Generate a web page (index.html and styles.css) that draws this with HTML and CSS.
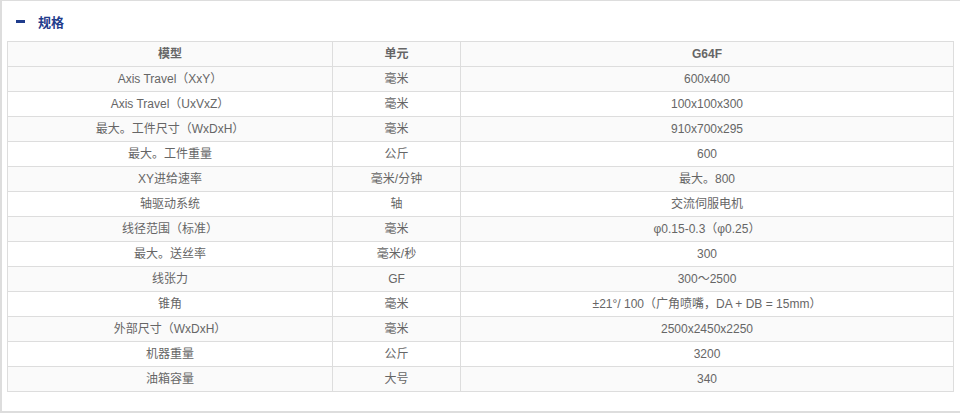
FILE: index.html
```html
<!DOCTYPE html>
<html lang="zh">
<head>
<meta charset="utf-8">
<title>规格</title>
<link rel="stylesheet" href="styles.css">
</head>
<body>
<div class="panel">
  <div class="panel-title"><span class="dash"></span><span class="title-text">规格</span></div>
  <table class="spec">
    <colgroup><col class="c1"><col class="c2"><col class="c3"></colgroup>
    <thead>
      <tr><th>模型</th><th>单元</th><th>G64F</th></tr>
    </thead>
    <tbody>
      <tr><td>Axis Travel（XxY）</td><td>毫米</td><td>600x400</td></tr>
      <tr><td>Axis Travel（UxVxZ）</td><td>毫米</td><td>100x100x300</td></tr>
      <tr><td>最大。工件尺寸（WxDxH）</td><td>毫米</td><td>910x700x295</td></tr>
      <tr><td>最大。工件重量</td><td>公斤</td><td>600</td></tr>
      <tr><td>XY进给速率</td><td>毫米/分钟</td><td>最大。800</td></tr>
      <tr><td>轴驱动系统</td><td>轴</td><td>交流伺服电机</td></tr>
      <tr><td>线径范围（标准）</td><td>毫米</td><td>φ0.15-0.3（φ0.25）</td></tr>
      <tr><td>最大。送丝率</td><td>毫米/秒</td><td>300</td></tr>
      <tr><td>线张力</td><td>GF</td><td>300～2500</td></tr>
      <tr><td>锥角</td><td>毫米</td><td>±21°/ 100（广角喷嘴，DA + DB = 15mm）</td></tr>
      <tr><td>外部尺寸（WxDxH）</td><td>毫米</td><td>2500x2450x2250</td></tr>
      <tr><td>机器重量</td><td>公斤</td><td>3200</td></tr>
      <tr><td>油箱容量</td><td>大号</td><td>340</td></tr>
    </tbody>
  </table>
</div>
</body>
</html>
```
FILE: styles.css
```css
html, body {
  margin: 0;
  padding: 0;
  background: #ffffff;
}
body {
  font-family: "Liberation Sans", Arial, "Noto Sans CJK SC", sans-serif;
  font-size: 12px;
  color: #666666;
}
.panel {
  width: 955px;
  height: 410px;
  border-style: solid;
  border-color: #dddddd;
  border-width: 1px 2px 2px 2px;
  padding: 0 0 0 5px;
  box-sizing: content-box;
}
.panel-title {
  height: 40px;
  display: flex;
  align-items: center;
  padding-left: 9px;
  box-sizing: border-box;
}
.dash {
  display: inline-block;
  width: 9px;
  height: 3px;
  background: #1f3c8c;
  margin-right: 13px;
  margin-top: 0px;
}
.title-text {
  font-family: "Noto Sans CJK SC", sans-serif;
  font-size: 13px;
  font-weight: bold;
  color: #1f3c8c;
  line-height: 1;
}
.spec {
  border-collapse: collapse;
  width: 946px;
  table-layout: fixed;
}
.spec col.c1 { width: 325px; }
.spec col.c2 { width: 128px; }
.spec col.c3 { width: 493px; }
.spec th, .spec td {
  border: 1px solid #dddddd;
  height: 24px;
  padding: 0 4px;
  text-align: center;
  vertical-align: middle;
  font-size: 12px;
  line-height: 14px;
  color: #666666;
  white-space: nowrap;
}
.spec th {
  font-weight: bold;
  color: #666666;
  background: #fafafa;
}
.spec tbody tr:nth-child(odd) td {
  background: #fafafa;
}
.spec tbody tr:nth-child(even) td {
  background: #ffffff;
}
```
